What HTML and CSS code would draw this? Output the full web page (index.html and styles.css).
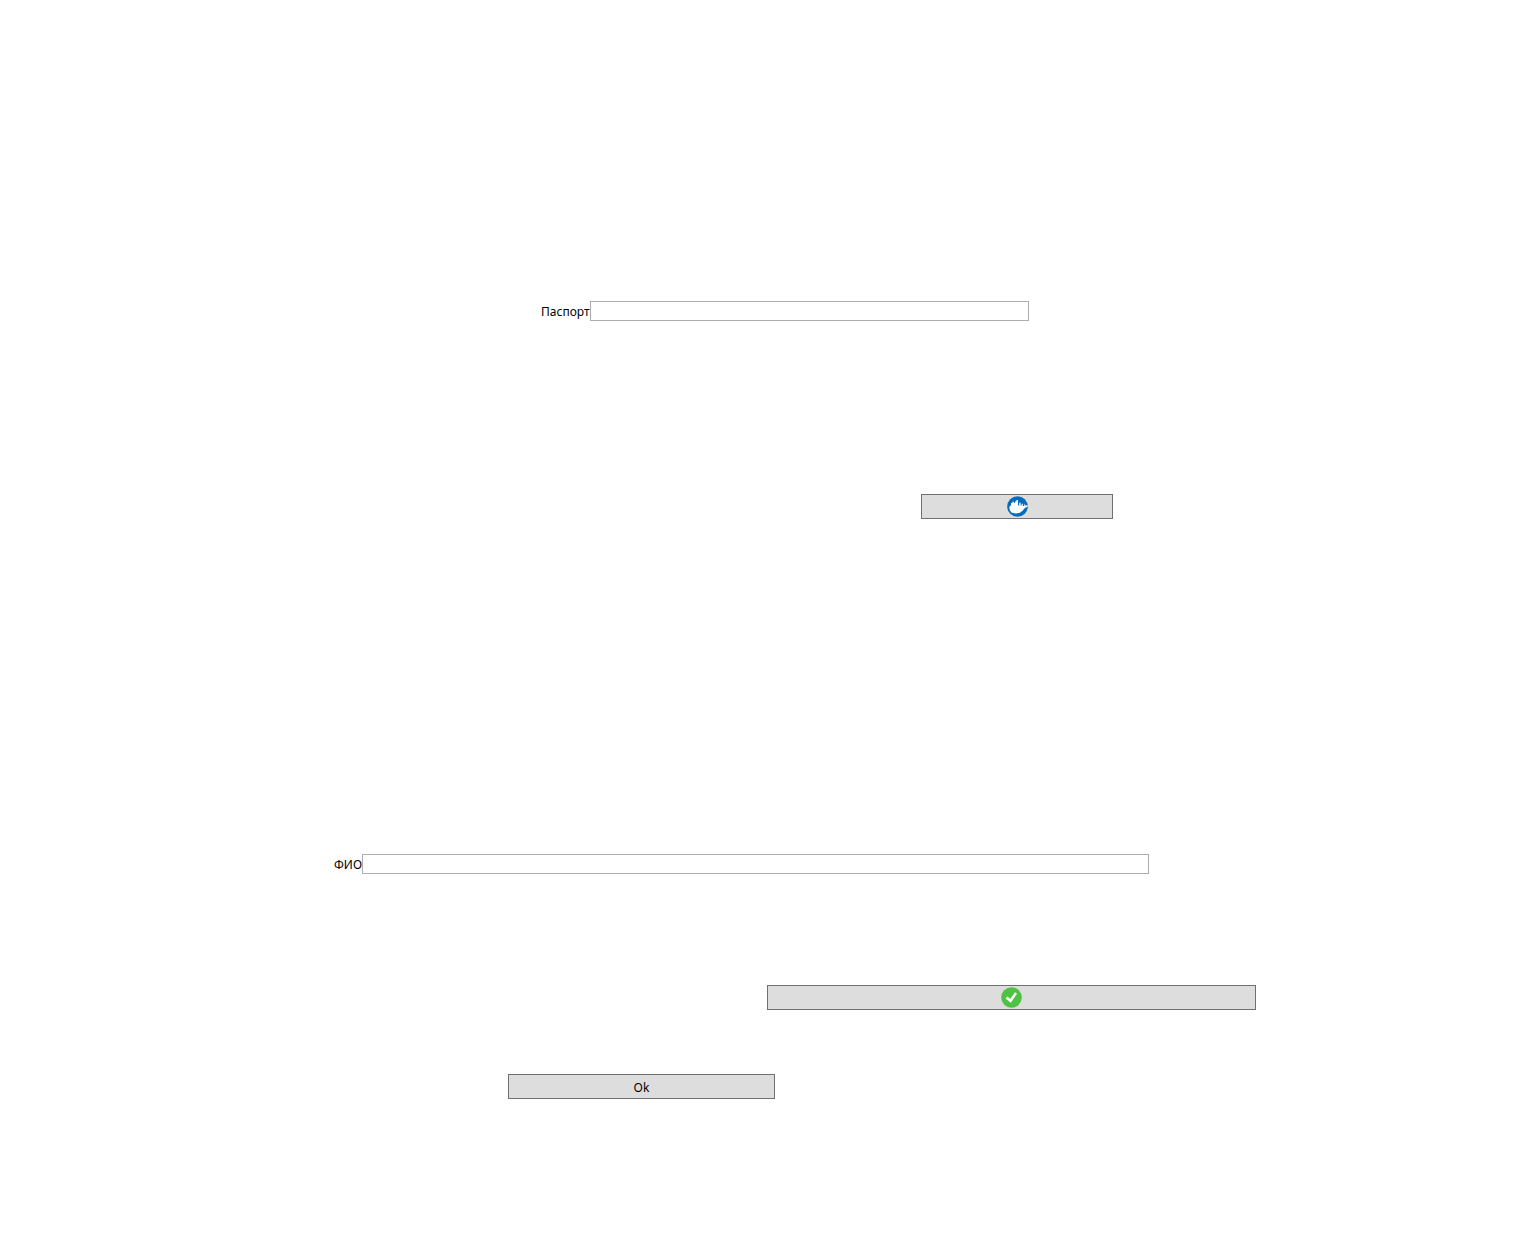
FILE: index.html
```html
<!DOCTYPE html>
<html lang="ru">
<head>
<meta charset="utf-8">
<title>Паспорт</title>
<link rel="stylesheet" href="styles.css">
</head>
<body>
<form class="form">
  <div class="row row-passport">
    <div class="field">
      <label for="passport">Паспорт</label>
      <input id="passport" type="text">
    </div>
  </div>
  <div class="row row-scan">
    <button class="button" type="button" aria-label="Сканировать">
      <svg class="icon" viewBox="0 0 21 21" aria-hidden="true">
        <circle cx="10.5" cy="10.5" r="10.3" fill="#0a6bbd"/>
        <path fill="#fff" d="M2.3 12 2.8 10 4 9.6V7H5.4V5.8H7V7H8V5.4H9.4V4H11V9.4H12.2V6.8H13.6V9.4H14.6V7.8H15.8V10H17.2V7.6L18.2 9.6 20.7 9.2 20.5 10.8 17.8 12 15.6 14.8 12.4 17 8.4 17.4 4.4 16.4 3 14.4Z"/>
      </svg>
    </button>
  </div>
  <div class="row row-name">
    <div class="field">
      <label for="name">ФИО</label>
      <input id="name" type="text">
    </div>
  </div>
  <div class="row row-check">
    <button class="button" type="button" aria-label="Проверить">
      <svg class="icon" viewBox="0 0 21 21" aria-hidden="true">
        <circle cx="10.5" cy="10.5" r="10.3" fill="#4fc143"/>
        <path fill="#fff" d="M4.6 11.4 6.6 9.6 9.2 12 14 5.2 16 6.8 9.8 15.8Z"/>
      </svg>
    </button>
  </div>
  <div class="row row-ok">
    <button class="button button-text" type="button">Ok</button>
  </div>
</form>
</body>
</html>
```
FILE: styles.css
```css
* {
  box-sizing: border-box;
}

body {
  margin: 0;
  background: #fff;
  color: #000;
  font: 12px/16px "Noto Sans", sans-serif;
}

.form {
  display: grid;
  min-height: 100vh;
  grid-template-rows: 301fr 20px 173fr 25px 335fr 20px 111fr 25px 64fr 25px 150fr;
}

.row {
  display: grid;
}

.row > * {
  grid-column: 2;
}

.row-passport {
  grid-row: 2;
  grid-template-columns: 541fr 488fr 505fr;
}

.row-scan {
  grid-row: 4;
  grid-template-columns: 921fr 192fr 421fr;
}

.row-name {
  grid-row: 6;
  grid-template-columns: 334fr 815fr 385fr;
}

.row-check {
  grid-row: 8;
  grid-template-columns: 767fr 489fr 278fr;
}

.row-ok {
  grid-row: 10;
  grid-template-columns: 508fr 267fr 759fr;
}

.field {
  display: flex;
  min-width: 0;
}

.field label {
  padding-top: 3px;
}

.field input {
  flex: 1;
  min-width: 0;
  margin: 0;
  padding: 0 2px;
  border: 1px solid #abadb3;
  background: #fff;
  font: inherit;
}

.button {
  display: flex;
  align-items: center;
  justify-content: center;
  min-width: 0;
  padding: 0 0 1px;
  border: 1px solid #707070;
  border-radius: 0;
  background: #ddd;
  color: #000;
  font: inherit;
}

.button-text {
  padding: 2px 0 0;
}

.icon {
  width: 21px;
  height: 21px;
}
```
